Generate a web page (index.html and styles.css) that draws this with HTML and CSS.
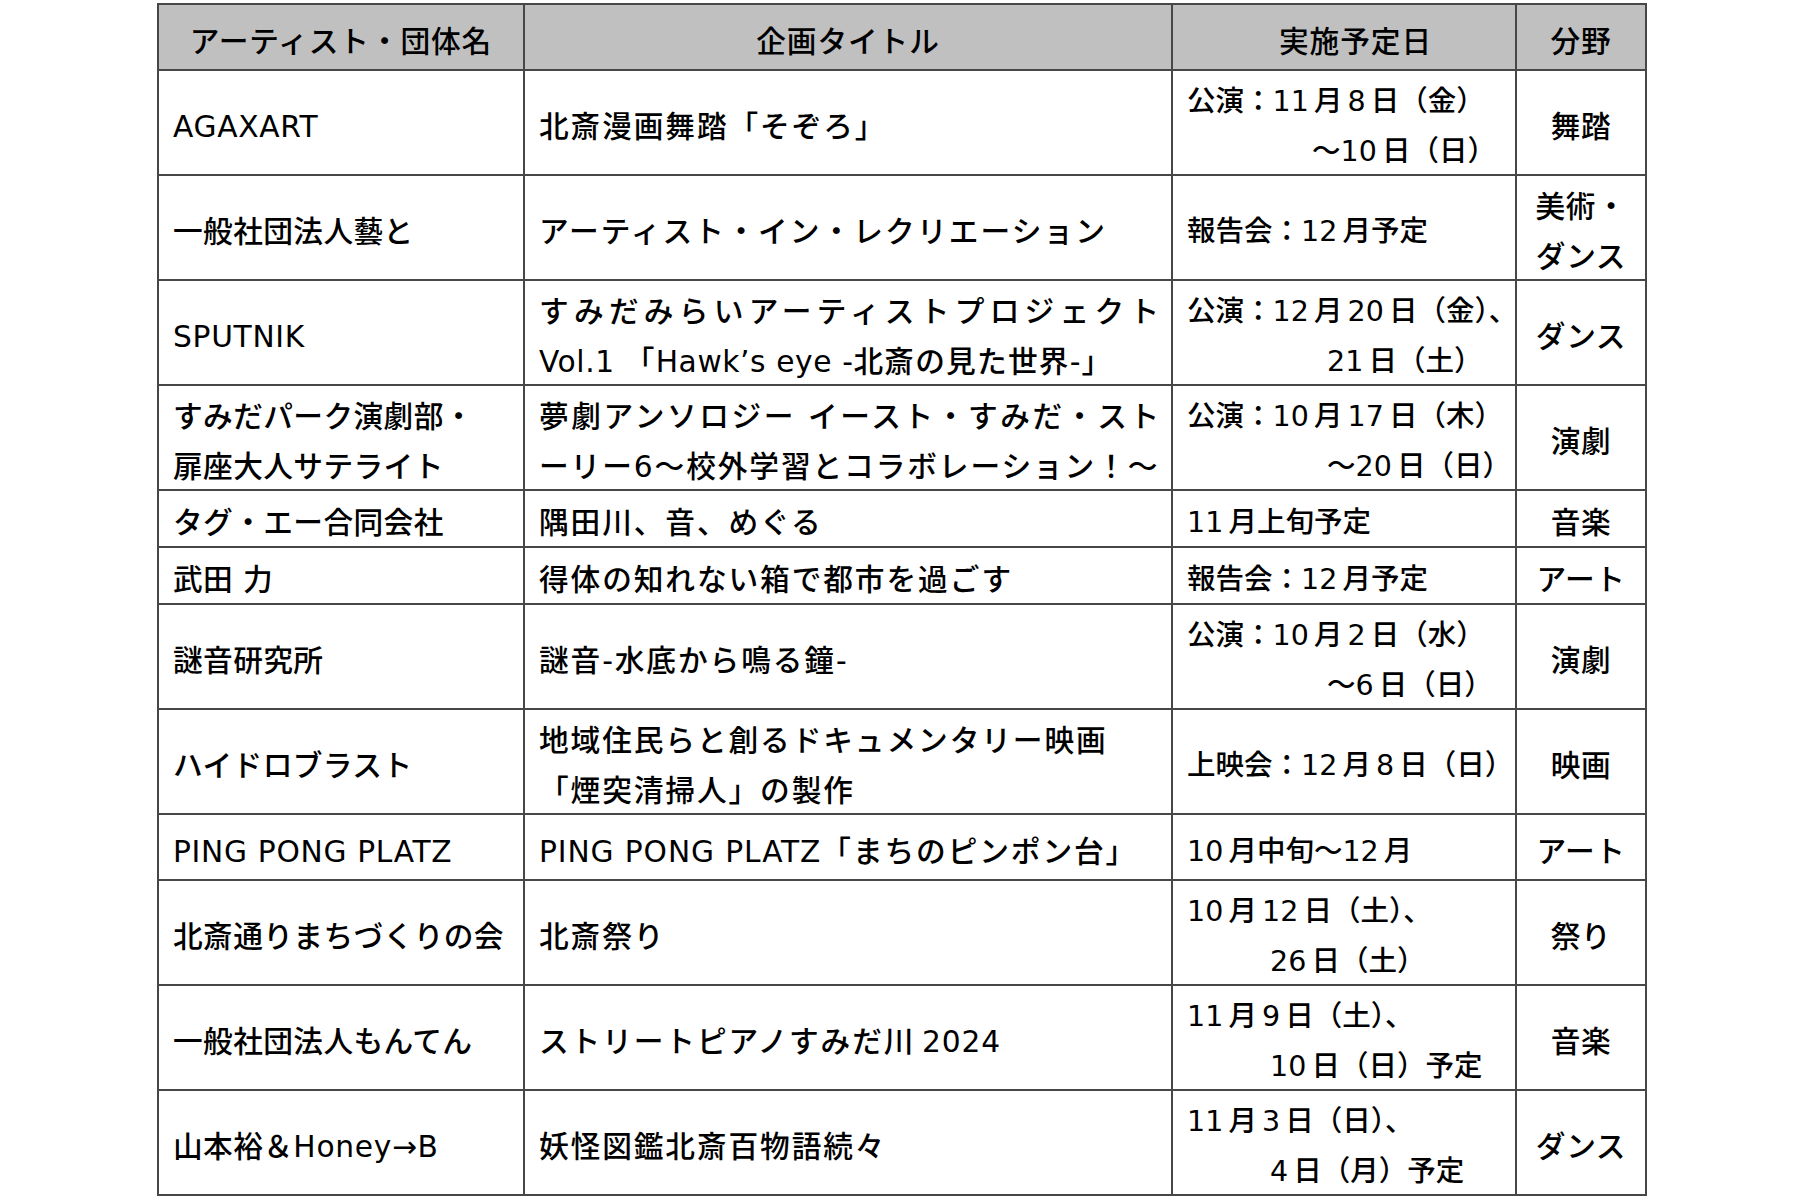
FILE: index.html
```html
<!DOCTYPE html>
<html lang="ja">
<head>
<meta charset="utf-8">
<title>企画一覧</title>
<link rel="stylesheet" href="styles.css">
</head>
<body>
<div class="sheet">
<table class="plan">
  <colgroup>
    <col class="c-name">
    <col class="c-title">
    <col class="c-date">
    <col class="c-genre">
  </colgroup>
  <thead>
    <tr class="rh">
      <th><div class="tx">アーティスト・団体名</div></th>
      <th><div class="tx">企画タイトル</div></th>
      <th class="th-date"><div class="tx">実施予定日</div></th>
      <th><div class="tx">分野</div></th>
    </tr>
  </thead>
  <tbody>
    <tr class="r2">
      <td class="name"><div class="tx lt">AGAXART</div></td>
      <td class="title"><div class="tx">北斎漫画舞踏「そぞろ」</div></td>
      <td class="date"><div class="tx"><span class="ln">公演：<span class="asr">11</span>月<span class="as">8</span>日（金）</span><span class="ln ind-a">～<span class="asr">10</span>日（日）</span></div></td>
      <td class="genre"><div class="tx">舞踏</div></td>
    </tr>
    <tr class="r2">
      <td class="name"><div class="tx">一般社団法人藝と</div></td>
      <td class="title"><div class="tx wide">アーティスト・イン・レクリエーション</div></td>
      <td class="date"><div class="tx">報告会：<span class="asr">12</span>月予定</div></td>
      <td class="genre"><div class="tx"><span class="ln">美術・</span><span class="ln">ダンス</span></div></td>
    </tr>
    <tr class="r2">
      <td class="name"><div class="tx lt">SPUTNIK</div></td>
      <td class="title"><div class="tx"><span class="ln jl">すみだみらいアーティストプロジェクト</span><span class="ln tight"><span class="lt">Vol.1 </span>「<span class="lt">Hawk’s eye -</span>北斎の見た世界-」</span></div></td>
      <td class="date"><div class="tx"><span class="ln">公演：<span class="asr">12</span>月<span class="as">20</span>日（金）、</span><span class="ln ind-b"><span class="asr">21</span>日（土）</span></div></td>
      <td class="genre"><div class="tx">ダンス</div></td>
    </tr>
    <tr class="r2">
      <td class="name"><div class="tx"><span class="ln">すみだパーク演劇部・</span><span class="ln">扉座大人サテライト</span></div></td>
      <td class="title"><div class="tx"><span class="ln jl">夢劇アンソロジー イースト・すみだ・スト</span><span class="ln">ーリー6～校外学習とコラボレーション！～</span></div></td>
      <td class="date"><div class="tx"><span class="ln">公演：<span class="asr">10</span>月<span class="as">17</span>日（木）</span><span class="ln ind-b">～<span class="asr">20</span>日（日）</span></div></td>
      <td class="genre"><div class="tx">演劇</div></td>
    </tr>
    <tr class="r1">
      <td class="name"><div class="tx">タグ・エー合同会社</div></td>
      <td class="title"><div class="tx">隅田川、音、めぐる</div></td>
      <td class="date"><div class="tx"><span class="asr">11</span>月上旬予定</div></td>
      <td class="genre"><div class="tx">音楽</div></td>
    </tr>
    <tr class="r1">
      <td class="name"><div class="tx">武田 力</div></td>
      <td class="title"><div class="tx">得体の知れない箱で都市を過ごす</div></td>
      <td class="date"><div class="tx">報告会：<span class="asr">12</span>月予定</div></td>
      <td class="genre"><div class="tx">アート</div></td>
    </tr>
    <tr class="r2">
      <td class="name"><div class="tx">謎音研究所</div></td>
      <td class="title"><div class="tx">謎音-水底から鳴る鐘-</div></td>
      <td class="date"><div class="tx"><span class="ln">公演：<span class="asr">10</span>月<span class="as">2</span>日（水）</span><span class="ln ind-b">～<span class="asr">6</span>日（日）</span></div></td>
      <td class="genre"><div class="tx">演劇</div></td>
    </tr>
    <tr class="r2">
      <td class="name"><div class="tx">ハイドロブラスト</div></td>
      <td class="title"><div class="tx"><span class="ln">地域住民らと創るドキュメンタリー映画</span><span class="ln">「煙突清掃人」の製作</span></div></td>
      <td class="date"><div class="tx">上映会：<span class="asr">12</span>月<span class="as">8</span>日（日）</div></td>
      <td class="genre"><div class="tx">映画</div></td>
    </tr>
    <tr class="rh">
      <td class="name"><div class="tx lt">PING PONG PLATZ</div></td>
      <td class="title"><div class="tx"><span class="lt">PING PONG PLATZ</span>「まちのピンポン台」</div></td>
      <td class="date"><div class="tx"><span class="asr">10</span>月中旬～<span class="asr">12</span>月</div></td>
      <td class="genre"><div class="tx">アート</div></td>
    </tr>
    <tr class="r2">
      <td class="name"><div class="tx">北斎通りまちづくりの会</div></td>
      <td class="title"><div class="tx">北斎祭り</div></td>
      <td class="date"><div class="tx"><span class="ln"><span class="asr">10</span>月<span class="as">12</span>日（土）、</span><span class="ln ind-c"><span class="asr">26</span>日（土）</span></div></td>
      <td class="genre"><div class="tx">祭り</div></td>
    </tr>
    <tr class="r2">
      <td class="name"><div class="tx">一般社団法人もんてん</div></td>
      <td class="title"><div class="tx">ストリートピアノすみだ川<span class="asl lt">2024</span></div></td>
      <td class="date"><div class="tx"><span class="ln"><span class="asr">11</span>月<span class="as">9</span>日（土）、</span><span class="ln ind-c"><span class="asr">10</span>日（日）予定</span></div></td>
      <td class="genre"><div class="tx">音楽</div></td>
    </tr>
    <tr class="r2">
      <td class="name"><div class="tx">山本裕＆<span class="lt">Honey→B</span></div></td>
      <td class="title"><div class="tx">妖怪図鑑北斎百物語続々</div></td>
      <td class="date"><div class="tx"><span class="ln"><span class="asr">11</span>月<span class="as">3</span>日（日）、</span><span class="ln ind-c"><span class="asr">4</span>日（月）予定</span></div></td>
      <td class="genre"><div class="tx">ダンス</div></td>
    </tr>
  </tbody>
</table>
</div>
</body>
</html>
```

FILE: styles.css
```css
html, body {
  margin: 0;
  padding: 0;
  background: #ffffff;
}

body {
  font-family: "DejaVu Sans", "Noto Sans CJK JP", sans-serif;
  font-size: 29.7px;
  font-weight: 500;
  color: #000000;
}

.sheet {
  padding: 3px 0 0 157px;
}

.plan {
  border-collapse: collapse;
  table-layout: fixed;
  width: 1488px;
}

.c-name { width: 366px; }
.c-title { width: 648px; }
.c-date { width: 344px; }
.c-genre { width: 130px; }

.plan th,
.plan td {
  border: 2px solid #474747;
  padding: 3px 14px 0 14px;
  line-height: 50px;
  vertical-align: middle;
  text-align: left;
  font-weight: 500;
  white-space: nowrap;
}

/* lowers the text a little inside its cell, like the Word table it copies */
.tx {
  margin-bottom: -6px;
}

.plan th {
  background: #c0c0c0;
  text-align: center;
  letter-spacing: 0.9px;
}

.plan th.th-date {
  padding-left: 37px;
}

.rh { height: 66px; }
.r2 { height: 105px; }
.r1 { height: 57px; }

.plan td.name {
  letter-spacing: 0.4px;
}

.plan td.name .lt {
  letter-spacing: 0.7px;
}

.plan td.title {
  letter-spacing: 1.9px;
  padding-right: 10px;
}

.plan td.title .wide {
  letter-spacing: 2.1px;
}

.plan td.title .lt {
  letter-spacing: 0.9px;
}

.plan td.title .tight {
  letter-spacing: 1.2px;
}

.plan td.title .tight .lt {
  letter-spacing: 0.6px;
}

.plan td.date {
  font-size: 28.5px;
}

.plan td.genre {
  text-align: center;
  letter-spacing: 0.6px;
}

.ln {
  display: block;
}

.jl {
  text-align: justify;
  text-align-last: justify;
}

.as { margin: 0 0.18em; }
.asr { margin-right: 0.18em; }
.asl { margin-left: 0.22em; }

.ind-a { padding-left: 125px; }
.ind-b { padding-left: 140px; }
.ind-c { padding-left: 83px; }
```
